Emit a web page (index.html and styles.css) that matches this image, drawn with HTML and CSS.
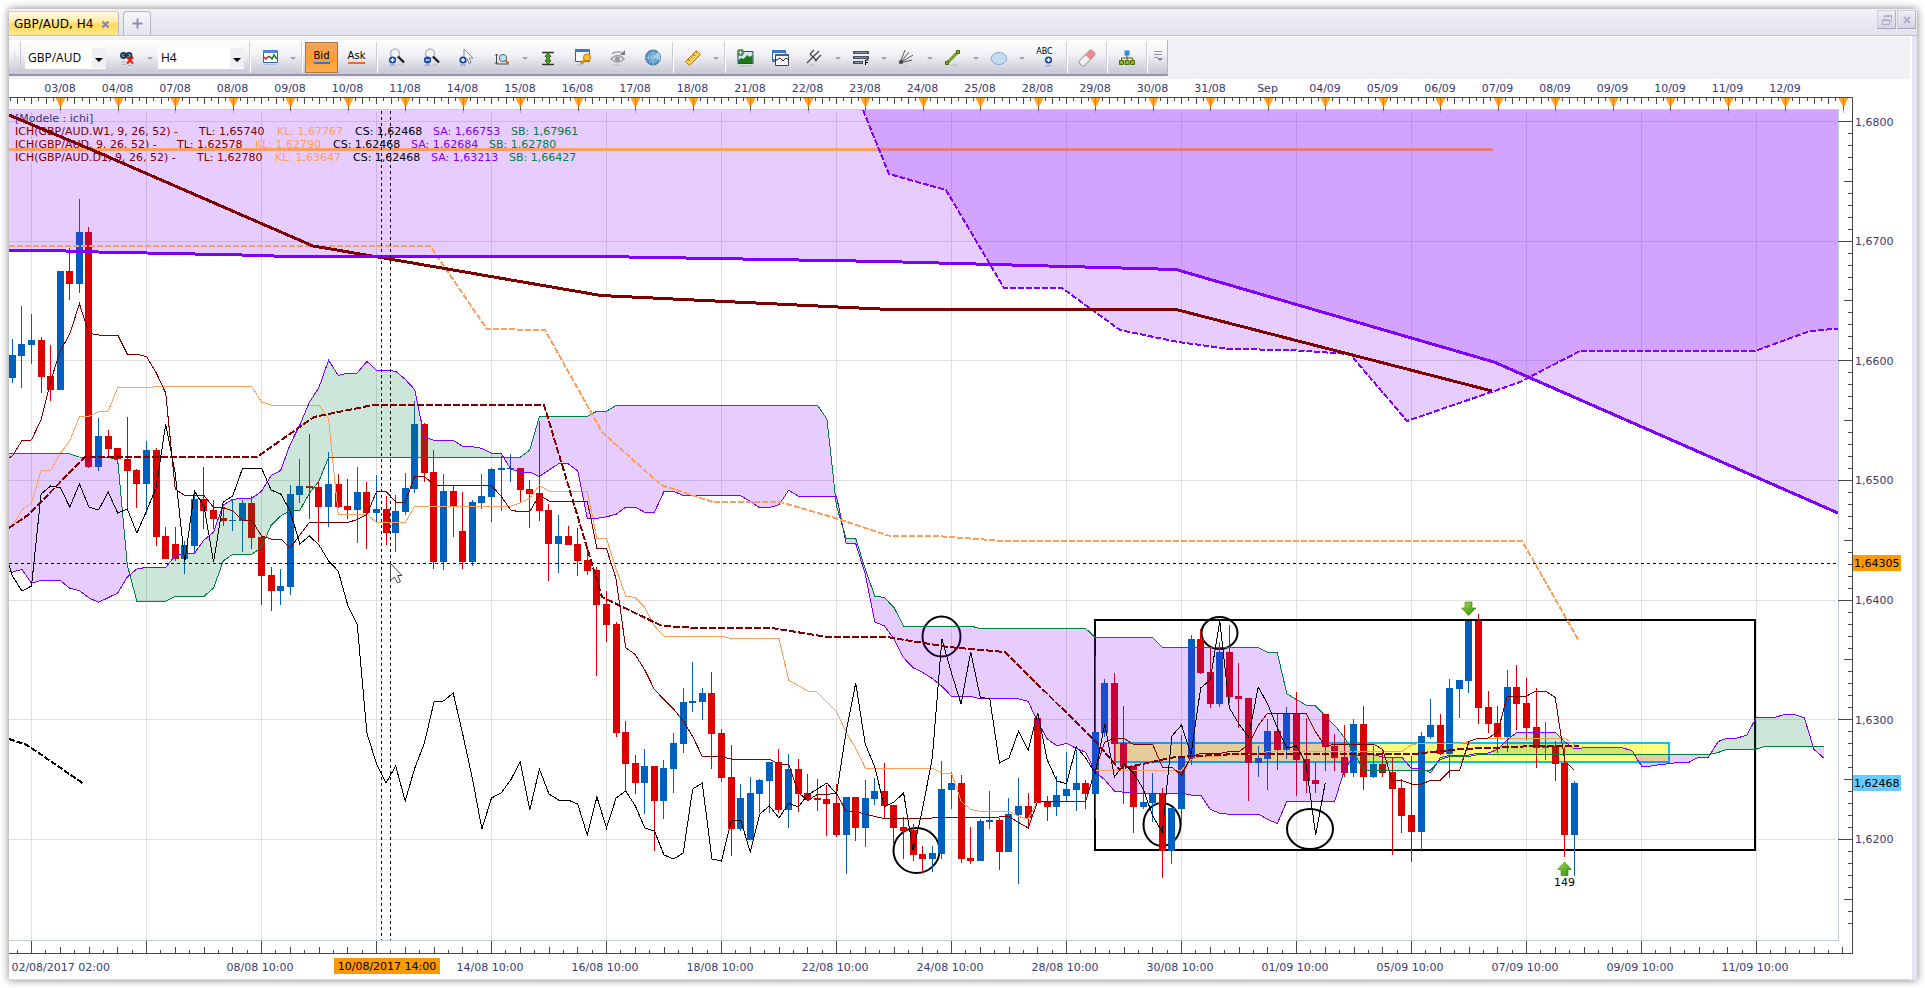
FILE: index.html
```html
<!DOCTYPE html>
<html lang="fr">
<head>
<meta charset="utf-8">
<title>GBP/AUD, H4</title>
<link rel="stylesheet" href="styles.css">
</head>
<body>
<div class="window">
  <header class="tabbar">
    <nav class="tabs">
      <div class="tab tab-active"><span>GBP/AUD, H4</span>
        <button class="tab-close" aria-label="Close tab"><svg width="9" height="9" viewBox="0 0 9 9"><path d="M1.5 1.5l6 6M7.5 1.5l-6 6" stroke="#8886a8" stroke-width="2.2"/></svg></button>
      </div>
      <button class="tab tab-new" aria-label="New tab"><svg width="11" height="11" viewBox="0 0 11 11"><path d="M5.500 .5v10M.5 5.500h10" stroke="#8f8dab" stroke-width="2"/></svg></button>
    </nav>
    <div class="window-buttons">
      <button class="win-btn" aria-label="Restore"><svg width="12" height="12" viewBox="0 0 12 12" fill="none" stroke="#b2b2cc"><path d="M3.500 4V1.500h7v6H9M3.500 2.500h7"/><path d="M1.500 5.500h7v5h-7zM1.500 6.500h7"/></svg></button>
      <button class="win-btn" aria-label="Close"><svg width="10" height="10" viewBox="0 0 10 10"><path d="M2 2l6 6M8 2l-6 6" stroke="#b2b2cc" stroke-width="2.400"/></svg></button>
    </div>
  </header>
  <main class="pane">
    <div class="toolbar-row">
      <div class="toolbar">
        <span class="grip"></span>
        <div class="combo combo-symbol"><select aria-label="Symbol"><option>GBP/AUD</option></select><span class="combo-arrow"></span></div>
        <button class="tool" aria-label="Unlink"><svg width="18" height="18" viewBox="0 0 18 18" fill="none"><circle cx="5.500" cy="6.500" r="2.600" fill="#7f9db5" stroke="#1d3350" stroke-width="1.600"/><circle cx="11" cy="6.500" r="2.600" fill="#7f9db5" stroke="#1d3350" stroke-width="1.600"/><path d="M5 6.500h6" stroke="#1d3350" stroke-width="1.500"/><path d="M9 8l6 6.500M15 8l-6 6.500" stroke="#ee1c00" stroke-width="2"/><path d="M3 13h4M4 15.500h4M10 16.500h4" stroke="#b4b4c2"/></svg></button>
        <button class="drop" aria-label="Link options"></button>
        <div class="combo combo-period"><select aria-label="Period"><option>H4</option></select><span class="combo-arrow"></span></div>
        <span class="sep"></span>
        <button class="tool" aria-label="Chart type"><svg width="18" height="18" viewBox="0 0 18 18"><path d="M2.500 1.500h14v12h-14z" fill="#fff" stroke="#2d5fc0"/><path d="M2 1h15v3H2z" fill="#4a85e0"/><path d="M3 8l2 2 3-3" fill="none" stroke="#d82010" stroke-width="1.500"/><path d="M8 7l3 3 2-4 3 4" fill="none" stroke="#207020" stroke-width="1.500"/><path d="M2 15.500h14" stroke="#9db8e0" opacity=".7"/></svg></button>
        <button class="drop" aria-label="Chart type options"></button>
        <span class="sep"></span>
        <button class="quote quote-bid"><span>Bid</span></button>
        <button class="quote quote-ask"><span>Ask</span></button>
        <span class="sep"></span>
        <button class="tool" aria-label="Zoom in"><svg width="18" height="20" viewBox="0 0 18 20"><circle cx="7" cy="5.500" r="4.500" fill="#f1f3f6" stroke="#b4b8c0" stroke-width="1.500"/><path d="M10 8.500l6 6" stroke="#222" stroke-width="2.400"/><circle cx="4.500" cy="12" r="3.600" fill="#1548a8"/><path d="M4.500 10v4M2.500 12h4" stroke="#fff" stroke-width="1.300"/><path d="M2 18a3 3 0 0 1 5 0" stroke="#9db2dc" fill="none" stroke-width="2"/><path d="M9 18l3-2 3 2" stroke="#b8b8c4" fill="none"/></svg></button>
        <button class="tool" aria-label="Zoom out"><svg width="18" height="20" viewBox="0 0 18 20"><circle cx="7" cy="5.500" r="4.500" fill="#f1f3f6" stroke="#b4b8c0" stroke-width="1.500"/><path d="M10 8.500l6 6" stroke="#222" stroke-width="2.400"/><circle cx="4.500" cy="12" r="3.600" fill="#1548a8"/><path d="M2.500 12h4" stroke="#fff" stroke-width="1.300"/><path d="M2 18a3 3 0 0 1 5 0" stroke="#9db2dc" fill="none" stroke-width="2"/><path d="M9 18l3-2 3 2" stroke="#b8b8c4" fill="none"/></svg></button>
        <button class="tool" aria-label="Pointer zoom"><svg width="18" height="20" viewBox="0 0 18 20"><path d="M6 1v12l3-2.500 2 5 2-1-2-4.500h4z" fill="#f6f6f8" stroke="#8a8a92"/><circle cx="5" cy="12" r="3.600" fill="#1548a8"/><path d="M5 10v4M3 12h4" stroke="#fff" stroke-width="1.300"/><path d="M2.500 18a3 3 0 0 1 5 0" stroke="#9db2dc" fill="none" stroke-width="2"/></svg></button>
        <button class="tool" aria-label="Fit"><svg width="18" height="20" viewBox="0 0 18 20"><path d="M3.500 6v10h12M2 7.500L3.500 6 5 7.500M2 14.500L3.500 16 5 14.500" fill="none" stroke="#444"/><circle cx="10" cy="10" r="3.600" fill="#b9e4ee" stroke="#4d6a72"/><path d="M12.500 12.500l3 3" stroke="#b8641a" stroke-width="2"/></svg></button>
        <button class="drop" aria-label="Fit options"></button>
        <button class="tool" aria-label="Autoscale"><svg width="14" height="18" viewBox="0 0 14 18"><path d="M1 3.500h12M1 15.500h12" stroke="#333" stroke-width="1.500"/><path d="M7 3.500l3 4H8.500v4H10l-3 4-3-4h1.500v-4H4z" fill="#4ca01c" stroke="#1c5806" stroke-width=".8"/></svg></button>
        <button class="tool" aria-label="Properties"><svg width="18" height="20" viewBox="0 0 18 20"><path d="M1.500 1.500h14v12h-14z" fill="#f4f8ff" stroke="#2d5fb4"/><path d="M1 1h15v3H1z" fill="#3f76d0"/><path d="M7 16l5-5" stroke="#d99000" stroke-width="2.600"/><circle cx="13" cy="9.500" r="3.600" fill="#f8bc30" stroke="#c07808"/><path d="M3 17h6" stroke="#b0bcd8"/></svg></button>
        <button class="tool" aria-label="Visibility"><svg width="18" height="18" viewBox="0 0 18 18" fill="none"><path d="M2 10q7-7 13 0-6 6-13 0z" fill="#ececf0" stroke="#a0a0a6" stroke-width="1.500"/><circle cx="8.500" cy="10" r="2.600" fill="#98989e"/><path d="M3 5q5-4 10-1" stroke="#a0a0a6" stroke-width="1.500"/><path d="M11 6l5-5v5z" fill="#77777d"/><path d="M4 16q4 1 8 0" stroke="#bcbcc6"/></svg></button>
        <button class="tool" aria-label="Radar"><svg width="18" height="18" viewBox="0 0 18 18"><circle cx="9" cy="8.500" r="7.500" fill="#5796c4" stroke="#3a78aa"/><path d="M9 8.500L14 3q3 3 2 8z" fill="#a9d3ea"/><circle cx="9" cy="8.500" r="4.500" fill="none" stroke="#a8cde4"/><circle cx="9" cy="8.500" r="2" fill="none" stroke="#c8e4f2"/><path d="M9 1v15M1.500 8.500h15" stroke="#8dbcd8" stroke-width=".7"/></svg></button>
        <span class="sep"></span>
        <button class="tool" aria-label="Ruler"><svg width="18" height="18" viewBox="0 0 18 18"><path d="M1.500 12.500l11-11 4 4-11 11z" fill="#f8ce5a" stroke="#b07a20"/><path d="M4 10l2 2M6.500 7.500l1.500 1.500M9 5l2 2M11.500 2.500L13 4" stroke="#8a5c10"/></svg></button>
        <button class="drop" aria-label="Ruler options"></button>
        <span class="sep"></span>
        <button class="tool" aria-label="Add image"><svg width="18" height="20" viewBox="0 0 18 20"><path d="M2 3.500h15v12H2z" fill="#cfe6f8" stroke="#22467e"/><path d="M2.500 15v-3l3-2 2 1 4-4 2 2 3-2v8z" fill="#1c7a10"/><circle cx="4.500" cy="4.500" r="3.400" fill="#3c8c18"/><path d="M4.500 2.500v4M2.500 4.500h4" stroke="#fff" stroke-width="1.200"/><path d="M3 18h13" stroke="#a8c0a8"/></svg></button>
        <button class="tool" aria-label="Overlay"><svg width="18" height="18" viewBox="0 0 18 18"><path d="M1.500 1.500h13v11h-13z" fill="#f4f8ff" stroke="#2d5fb4"/><path d="M1 1h14v3H1z" fill="#3f76d0"/><path d="M4.500 5.500h13v11h-13z" fill="#f8f8fc" stroke="#33435e"/><path d="M4 5h14v2H4z" fill="#4a5f86"/><path d="M2 11h4l3-2 3 3 3-3 3 2" fill="none" stroke="#222"/></svg></button>
        <button class="tool" aria-label="Pitchfork"><svg width="18" height="18" viewBox="0 0 18 18" fill="none" stroke="#444" stroke-width="1.200"><path d="M1 14l5-5M4 5l7 7M4 5l4-4M6 9l7-7M9 12l6-6"/><path d="M4 16h5" stroke="#bbb"/></svg></button>
        <button class="drop" aria-label="Pitchfork options"></button>
        <button class="tool" aria-label="Fibonacci levels"><svg width="18" height="18" viewBox="0 0 18 18"><path d="M1 3.500h16M1 8.500h16M1 13.500h10" stroke="#46525f" stroke-width="3"/><path d="M3 3.500h12M3 8.500h12M3 13.500h7" stroke="#8794a0"/><path d="M13.500 16v-5h3M13.500 13.500h2.500" fill="none" stroke="#000"/></svg></button>
        <button class="drop" aria-label="Fibonacci options"></button>
        <button class="tool" aria-label="Fan"><svg width="18" height="18" viewBox="0 0 18 18" fill="none" stroke="#555"><path d="M2 14L7 1M2 14l9-11M2 14L15 6M2 14l12-3"/><circle cx="3" cy="13" r="1.800" fill="#444"/><path d="M5 17h5" stroke="#c0c0ca"/></svg></button>
        <button class="drop" aria-label="Fan options"></button>
        <button class="tool" aria-label="Trend line"><svg width="18" height="18" viewBox="0 0 18 18"><path d="M3 14L14 3" stroke="#3f6a08" stroke-width="2.600"/><path d="M3 14L14 3" stroke="#93bd1c" stroke-width="1.400"/><path d="M1.500 12.500h3v3h-3zM12.500 1.500h3v3h-3z" fill="#84b018" stroke="#3f6a08"/><path d="M6 16h8" stroke="#b6b6c2"/></svg></button>
        <button class="drop" aria-label="Line options"></button>
        <button class="tool" aria-label="Ellipse"><svg width="18" height="18" viewBox="0 0 18 18"><ellipse cx="9" cy="9.500" rx="7.800" ry="6" fill="#c5dcf0" stroke="#84aad0"/></svg></button>
        <button class="drop" aria-label="Shape options"></button>
        <button class="tool tool-text" aria-label="Text"><span class="abc">ABC</span><svg width="9" height="12" viewBox="0 0 9 12"><circle cx="4.500" cy="4" r="3.600" fill="#1548a8"/><path d="M4.500 2v4M2.500 4h4" stroke="#fff" stroke-width="1.300"/><path d="M2 10.500a3 3 0 0 1 5 0" stroke="#9db2dc" fill="none" stroke-width="1.500"/></svg></button>
        <span class="sep sep-wide"></span>
        <button class="tool" aria-label="Eraser"><svg width="18" height="18" viewBox="0 0 18 18"><g transform="rotate(-45 9 9)"><rect x="0" y="5.500" width="18" height="7" rx="2.500" fill="#f2f0f0" stroke="#a89c9c"/><path d="M10 5.500h5.500a2.500 2.500 0 0 1 2.500 2.500v2a2.500 2.500 0 0 1-2.500 2.500H10z" fill="#e88a92"/></g></svg></button>
        <span class="sep"></span>
        <button class="tool" aria-label="Object tree"><svg width="18" height="18" viewBox="0 0 18 18"><path d="M9 6v5M3.500 12V9h11v3" fill="none" stroke="#4c6a10"/><path d="M6.500 1.500h5v5h-5z" fill="#2e8ae6"/><path d="M1.500 11.500h4v4h-4zM7 11.500h4v4H7zM12.500 11.500h4v4h-4z" fill="#93b81c" stroke="#4c6a10"/></svg></button>
        <span class="sep sep-end"></span>
        <button class="overflow" aria-label="More tools"><svg width="10" height="12" viewBox="0 0 10 12"><path d="M1 1.500h8M1 4.500h8M1 7.500h4" stroke="#9090a6"/><path d="M4 8h6l-3 3z" fill="#808098"/></svg></button>
      </div>
    </div>
    <svg id="chart" class="chart" viewBox="9 79 1901 900" role="img" aria-label="GBP/AUD H4 Ichimoku chart"></svg>
  </main>
</div>
<script src="chart.js"></script>
</body>
</html>
```
FILE: styles.css
```css
* { box-sizing: border-box; }
body { margin: 0; padding: 9px 8px 8px 9px; background: #fff; font-family: "DejaVu Sans", Verdana, sans-serif; font-size: 11px; color: #000; }
button { border: 0; padding: 0; margin: 0; background: none; font: inherit; color: inherit; }
.window { box-shadow: 0 0 8px rgba(0, 0, 0, .5); background: #e5e4f0; }
.tabbar { display: flex; justify-content: space-between; height: 27px; padding-top: 2px; background: linear-gradient(#f1f1f5, #e2e2ec); border-bottom: 1px solid #c0c0d2; }
.tabs { display: flex; align-items: flex-end; gap: 4px; }
.tab { display: flex; align-items: center; height: 24px; border-radius: 0 4px 0 0; }
.tab-active { gap: 7px; padding: 1px 7px 0 5px; border-right: 1px solid #b9b6c8; border-top: 1px solid #d8cfa8; background: linear-gradient(#fffbe6, #ffe9a0 45%, #ffd95a 52%, #ffe88c); font-size: 12px; }
.tab-close { display: flex; padding: 1px; }
.tab-new { justify-content: center; width: 28px; border: 1px solid #b6b6cc; border-bottom: 0; border-radius: 4px 4px 0 0; background: linear-gradient(#f6f6fa, #e4e4ee); }
.window-buttons { display: flex; gap: 1px; padding-right: 1px; }
.win-btn { display: flex; align-items: center; justify-content: center; width: 19px; height: 19px; margin-top: -1px; border: 1px solid #cdcddd; border-bottom-color: #a4a4c0; border-right-color: #b0b0c8; background: linear-gradient(#eeeef6, #d4d4e2); }
.pane { margin-right: 5px; border-top: 1px solid #fff; border-right: 2px solid #fff; border-bottom: 1px solid #d8d8e2; background: #fff; }
.toolbar-row { display: flex; height: 42px; padding-top: 3px; background: #f0f0f5; }
.toolbar { display: flex; align-items: center; height: 36px; padding-top: 1px; border-right: 1px solid #b4b4c6; border-bottom: 2px solid #9494ac; background: linear-gradient(#fff, #f3f3f7 40%, #c6c6d4); }
.grip { width: 12px; height: 31px; margin-right: 4px; border-right: 1px solid #c9c9d6; background: repeating-linear-gradient(90deg, transparent 0 3px, #d6d6e0 3px 4px) content-box; padding: 10px 2px 10px 2px; }
.combo { position: relative; display: flex; height: 22px; background: #fff; }
.combo-symbol { width: 81px; margin-right: 3px; }
.combo-period { width: 86px; margin-left: 3px; margin-right: 3px; }
.combo select { flex: 1; min-width: 0; padding: 0 14px 0 3px; border: 0; background: none; appearance: none; font: 12px "Open Sans", sans-serif; color: #000; }
.combo-arrow { position: absolute; right: 0; top: 1px; width: 14px; height: 20px; background: #efeff4; pointer-events: none; }
.combo-arrow::after { content: ""; position: absolute; left: 3px; top: 10px; border: 4px solid transparent; border-top-color: #000; border-bottom: 0; }
.tool { display: flex; align-items: center; justify-content: center; flex: none; width: 35px; height: 31px; }
.tool-text { flex-direction: column; align-items: center; }
.tool-text svg { margin-left: 7px; }
.abc { font-size: 8px; line-height: 8px; }
.drop { position: relative; width: 11px; height: 31px; }
.drop::after { content: ""; position: absolute; left: 3px; top: 15px; border: 3px solid transparent; border-top-color: #a2a2b4; border-bottom: 0; }
.sep { flex: none; width: 5px; height: 31px; padding: 0 1px 0 2px; background: linear-gradient(90deg, #cfcfdb 50%, #fff 50%) content-box; }
.drop + .sep { margin-left: 1px; }
.sep-wide { margin-left: 2px; }
.quote { display: flex; align-items: center; justify-content: center; flex: none; width: 35px; height: 31px; font-size: 10px; line-height: 10px; }
.quote span { border-bottom: 2px solid #ff6030; padding-bottom: 1px; }
.quote-bid { width: 33px; margin: 0 1px; border: 1px solid #a87840; background: linear-gradient(#f4a45c, #ff9c38 60%, #ffb04c); }
.quote-bid span { border-bottom-color: #1080f0; }
.overflow { width: 18px; height: 31px; }
.chart { display: block; width: 100%; height: auto; font-family: "DejaVu Sans", Verdana, sans-serif; font-size: 11px; }
.chart text { fill: #3a3a70; }
.chart text.ink { fill: #000; }
.chart .tl { fill: #800000; }
.chart .kl { fill: #ff9f5a; }
.chart .cs { fill: #000; }
.chart .sa { fill: #8000ff; }
.chart .sb { fill: #008040; }
.crisp { shape-rendering: crispEdges; }
.line { fill: none; }
```
FILE: chart.js
```js
const svg = document.getElementById('chart');
const LEFT = 9, RIGHT = 1838, TOP = 110, BOTTOM = 940, PITCH = 115 / 12;
const barX = i => 12.33 + i * PITCH;
const priceY = p => 121.5 + (1.68 - p) * 11966;

function el(name, attrs, parent = svg, text) {
  const n = document.createElementNS('http://www.w3.org/2000/svg', name);
  for (const k in attrs) n.setAttribute(k, attrs[k]);
  if (text !== undefined) n.textContent = text;
  parent.appendChild(n);
  return n;
}

// Each block: y origin, then candles as direction + high, body top, body bottom, low in thirds of a unit.
const feed = [
  [170, `u507 555 624 638|u408 522 557 654|u432 510 524 582|d501 510 620 669|d525 618 660 693|u303 303 660 660|d234 303 342 390|u87 186 342 368|d171 186 891 893|u744 798 891 903|d780 798 836 858|d834 834 868 868|d741 867 903 1018|d897 899 942 1014|u813 840 942 1032|d834 840 1101 1128|d1071 1098 1167 1167|d1071 1122 1167 1173|u1113 1125 1167 1212|u963 987 1128 1146|d891 987 1023 1077|d990 1020 1047 1077|d1014 1044 1053 1067|u990 1050 1053 1083|u990 999 1052 1146|d978 999 1104 1137|d1098 1101 1217 1305|d1191 1215 1263 1323|u1197 1248 1263 1305|u945 972 1251 1275|u867 948 975 999|d792 948 953 1047|d933 951 1011 1116|u846 942 1011 1071|d912 942 1011 1014|d927 1008 1020 1047|u891 966 1020 1119|d936 966 1029 1137|u915 1017 1029 1056|d978 1017 1089 1125|u975 1023 1089 1146|u909 954 1026 1035|u693 762 957 969|d758 762 909 936|d840 906 1176 1197|u912 963 1176 1200|d948 963 1009 1101|d966 1083 1176 1197|u990 996 1176 1188`],
  [350, `u372 438 459 477|u354 357 441 516|u318 354 360 483|u312 354 357 396|d354 354 420 457|d390 417 432 534|d213 429 483 513|d462 480 582 693|u495 558 582 669|d528 558 585 585|d534 582 633 678|d594 630 663 675|d651 660 765 978|d723 762 825 876|d816 822 1149 1161|d1113 1146 1242 1324|d1215 1239 1299 1332|u1197 1248 1299 1392|d1248 1248 1353 1503|u1230 1254 1353 1407|u1149 1179 1257 1329|u1014 1056 1182 1209|u936 1053 1058 1086|u1014 1029 1056 1110|d966 1029 1152 1257|d1137 1149 1284 1296`],
  [550, `d585 681 837 918|u702 744 837 843|u681 729 870 870|u687 690 732 789|u636 636 693 789|d597 636 780 789|u612 657 780 834|d627 657 732 786|d672 729 750 750|d687 744 750 783|d706 747 762 858|d702 759 855 861|u741 741 855 972|d741 741 834 873|u690 744 834 891|u684 723 747 765|d639 723 767 804|d765 765 834 882|d802 831 843 927|d822 840 915 933|d888 912 927 969|u888 909 927 966|u633 717 912 927|u666 699 720 777|d675 699 927 939|d831 924 933 942|u807 813 933 933|u723 810 816 837|d804 810 906 960|u744 792 906 906|u684 768 795 1002|d729 768 804 834|d504 504 760 760|d738 756 771 813|u678 735 771 798|u606 717 738 753|u600 699 720 783|d690 699 732 777`],
  [560, `u288 516 702 777|u357 369 519 531|d339 369 552 606|d438 549 621 732|d618 618 741 819|u615 726 741 747|u640 699 729 786|d684 699 873 954|u744 744 873 912|u525 594 747 798|u225 237 597 615|d207 237 339 342|d264 336 432 444|u246 276 432 441|d195 276 411 429|d309 408 417 504|d414 414 609 723|u558 594 609 651|u477 513 597 690|d459 513 570 630|u441 459 570 597|d396 459 600 708|d474 597 663 699|d606 660 671 699|d462 462 560 633|d522 558 594 633|d495 591 639 651|u477 492 639 651|d438 492 651 690|u558 612 651 654|d576 612 639 651|d594 636 687 885|d657 684 768 819|d588 765 816 906|u516 528 816 870|u417 495 531 537|d462 495 582 585|u357 384 582 654|u360 360 387 474|u183 183 363 399|d162 183 444 492|d393 441 492 519|d438 489 531 579|u330 381 531 576|d315 381 432 510|d354 429 504 540|d384 501 564 624|u486 558 564 600|d543 558 612 663|d561 609 825 891|u663 669 825 948`]
];
const candles = feed.flatMap(([oy, rows]) => rows.split('|').map(r => {
  const v = r.slice(1).split(' ').map(n => oy + n / 3);
  return { up: r[0] === 'u', high: v[0], top: v[1], bottom: v[2], low: v[3] };
}));

// Values known before the loaded history is long enough to derive them; "y*n" repeats y n times.
const seed = s => s.split(' ').flatMap(t => {
  const [y, n] = t.split('*');
  return Array(+(n || 1)).fill(170 + y / 3);
});
const midpoint = (i, n) => {
  const w = candles.slice(i - n + 1, i + 1);
  return (Math.min(...w.map(c => c.high)) + Math.max(...w.map(c => c.low))) / 2;
};
const tenkan = seed('858 812 810 749 633 543 492 401');
const kijun = seed('1068 1021 999 901 901 851 812 740 739 725 723 653*4 650*10');
const spanA = seed('1207 1198 1240 1231*3 1255 1262 1284 1297 1283 1269 1221 1197 1192*3 1157 1150*2 1110 1086 1005 988 985 985 964 917 901 823 765 697 652 571 616 610 609 574 601 601 604 628 659 802 811*3 829 830 835 850');
const spanB = seed('850*6 852 861 862*3 870 1185 1294*4 1279*4 1254 1173 1153*3 1132 1066 1038 1021*2 970 933 862*21 840 739*6 724*2 706*14');
for (let i = tenkan.length; i < candles.length; i++) tenkan.push(midpoint(i, 9));
for (let i = kijun.length; i < candles.length; i++) kijun.push(midpoint(i, 26));
for (let i = spanA.length; i < candles.length + 26; i++) spanA.push((tenkan[i - 26] + kijun[i - 26]) / 2);
for (let i = spanB.length; i < candles.length + 26; i++) spanB.push(midpoint(i - 26, 52));
const chikou = candles.slice(26).map(c => (c.up ? c.top : c.bottom));

const defs = el('defs', {});
const clip = el('clipPath', { id: 'plot' }, defs);
el('rect', { x: LEFT, y: TOP, width: RIGHT - LEFT, height: BOTTOM - TOP }, clip);
const grad = el('linearGradient', { id: 'leaf', x1: 0, x2: 1, y1: 0, y2: 1 }, defs);
el('stop', { offset: 0, 'stop-color': '#b4e04c' }, grad);
el('stop', { offset: 1, 'stop-color': '#1c8a08' }, grad);

// Grid
const grid = el('g', { stroke: '#e0e0e0', class: 'crisp' });
for (let k = 0; k < 16; k++) el('path', { d: `M${31.5 + 115 * k} 112V${BOTTOM}` }, grid);
for (let k = 0; k < 7; k++) el('path', { d: `M${LEFT} ${Math.floor(priceY(1.68 - k / 100)) + .5}H${RIGHT - 2}` }, grid);

const plot = el('g', { 'clip-path': 'url(#plot)' });

// Drawings under the candles
el('rect', { x: 1115, y: 743, width: 554, height: 19, fill: '#ffff00', 'fill-opacity': .5, stroke: '#00c4ff', 'stroke-width': 2 }, plot);
el('rect', { x: 1095, y: 620, width: 660, height: 230, fill: 'none', stroke: '#000', 'stroke-width': 2 }, plot);
[[941.5, 636.5, 19, 20], [916.5, 850.5, 23, 22.5], [1219.5, 633, 18, 16], [1162, 824.5, 18.5, 21.5], [1310, 829, 23, 20]]
  .forEach(([cx, cy, rx, ry]) => el('ellipse', { cx, cy, rx, ry, fill: 'none', stroke: '#000', 'stroke-width': 2 }, plot));

// Candles
const bars = el('g', { class: 'crisp' }, plot);
candles.forEach((c, i) => {
  const x = Math.round(barX(i) - .5), fill = c.up ? '#0060c0' : '#dc0000';
  const y = Math.round(c.top), h = Math.max(1, Math.round(c.bottom) - y), hy = Math.round(c.high);
  el('rect', { x, y: hy, width: 1, height: Math.max(1, Math.round(c.low) - hy), fill }, bars);
  el('rect', { x: x - 3, y, width: 7, height: h, fill }, bars);
});

// H4 cloud
const fills = { a: '', b: '' };
let run = null;
const flush = () => {
  if (run && run.up.length > 1) fills[run.side] += 'M' + run.up.join('L') + 'L' + run.down.reverse().join('L') + 'Z';
};
for (let i = 0; i < spanA.length; i++) {
  const x = barX(i) - (i ? 0 : 4), d = spanA[i] - spanB[i], side = d > 0 ? 'a' : 'b';
  if (run && run.side !== side) {
    const p = spanA[i - 1] - spanB[i - 1], t = p / (p - d);
    const cx = barX(i - 1) + t * PITCH, cy = spanA[i - 1] + t * (spanA[i] - spanA[i - 1]);
    run.up.push([cx, cy]); run.down.push([cx, cy]);
    flush();
    run = { side, up: [[cx, cy]], down: [[cx, cy]] };
  }
  if (!run) run = { side, up: [], down: [] };
  run.up.push([x, spanA[i]]); run.down.push([x, spanB[i]]);
}
flush();
el('path', { d: fills.a, fill: '#8000ff', 'fill-opacity': .2, class: 'crisp' }, plot);
el('path', { d: fills.b, fill: '#008040', 'fill-opacity': .2, class: 'crisp' }, plot);

// Daily and weekly studies, in chart units
const weeklyA = '9,250 50,250.500 98,252 147,253 242,255 290,256.500 600,256.500 884,261.500 1176,269.500 1494,362 1838,513';
const dailyA = '863,110 889,174 946,190 1004,288 1062,288 1120,330 1178,342 1230,349 1289,350 1350,354 1407,421 1503,388 1520,382 1580,351 1755,351 1810,331 1838,328.500';
const fillAbove = pts => {
  const start = pts.split(',')[0];
  el('polygon', { points: `${start},${TOP} ${pts} ${RIGHT},${TOP}`, fill: '#8000ff', 'fill-opacity': .2, class: 'crisp' }, plot);
};
const line = (points, stroke, width, dash) => el('polyline', {
  points, stroke, 'stroke-width': width, class: 'line crisp', ...(dash ? { 'stroke-dasharray': dash } : {})
}, plot);

fillAbove(weeklyA);

// Study legend: label, column start, then one value per line of the study
const legend = [
  ['ICH(GBP/AUD.W1, 9, 26, 52) -', 199, '1,65740', '1,67767', '1,62468', '1,66753', '1,67961'],
  ['ICH(GBP/AUD, 9, 26, 52) -', 177, '1,62578', '1,62790', '1,62468', '1,62684', '1,62780'],
  ['ICH(GBP/AUD.D1, 9, 26, 52) -', 197, '1,62780', '1,63647', '1,62468', '1,63213', '1,66427']
];
el('text', { x: 15, y: 122 }, plot, '[Modele : ichi]');
legend.forEach(([label, start, ...values], r) => {
  const y = 135 + 13 * r;
  el('text', { x: 15, y }, plot).append(el('tspan', { class: 'tl' }, plot, label));
  ['tl', 'kl', 'cs', 'sa', 'sb'].forEach((k, n) => {
    el('tspan', { class: k }, el('text', { x: start + 78 * n, y }, plot), `${k.toUpperCase()}: ${values[n]}`);
  });
});
line('9,149.500 1493,149.500', '#ff9f5a', 3);
fillAbove(dailyA);

const series = v => v.map((y, i) => `${barX(i).toFixed(1)},${y.toFixed(1)}`).join(' ');
line(`5,532 ${series(kijun)}`, '#ff9f5a', 1);
line(`5,460 ${series(tenkan)}`, '#800000', 1);
line(`5,570 ${series(spanA)}`, '#8000ff', 1);
line(`5,453.300 ${series(spanB)}`, '#008040', 1);
line(`5,552 ${series(chikou)}`, '#000', 1);
line('9,246 430,246 487,329 545,330 602,432 661,485 713,502 780,502 835,518 888,535.500 943,536.500 1004,541 1522,541 1533,560 1579,641', '#ff9f5a', 2, '6 2');
line('9,528 28,515 85,457 257,457 314,417 373,405 544,405 602,597 662,626 700,628 772,628 827,637 887,637 948,647 1005,652 1097,743 1119,769 1175,757 1237,754 1413,754 1460,749 1490,748 1534,746 1579,746', '#800000', 2, '7 2');
line('9,739 27,745 84,784', '#000', 2, '6 2');
line(dailyA, '#8000ff', 2, '6 2');
line('9,115 97,152 313,246 375,256.500 601,295.500 890,309.500 1176,309.500 1492,391', '#800000', 3);
line(weeklyA, '#8000ff', 3);

// Crosshair and pointer
line('381.500,111 381.500,940', '#000', 1, '3 3');
line('390.500,111 390.500,940', '#000', 1, '3 3');
line('9,563.500 1838,563.500', '#000', 1, '3 3');
el('path', { d: 'M390.500 563.500v17l4-3.500 3 6 3-1.500-3-6h4.500z', fill: '#fff', stroke: '#404050' }, plot);

// Trade markers
el('path', { d: 'M1465 602h7v6h4l-7.500 7.500-7-7.500h3.500z', fill: 'url(#leaf)', stroke: '#3c7c10', 'stroke-width': .6 }, plot);
el('path', { d: 'M1561 875.500h7v-6h3.500l-7-7.500-7 7.500h3.500z', fill: 'url(#leaf)', stroke: '#3c7c10', 'stroke-width': .6 }, plot);
el('text', { x: 1564.5, y: 886, 'text-anchor': 'middle', class: 'ink' }, plot, '149');

// Plot frame
el('path', { d: `M${LEFT} ${TOP - .5}H${RIGHT + .5}V${BOTTOM + .5}H${LEFT}`, fill: 'none', stroke: '#c3cfdc', class: 'crisp' });

// Axes
const axis = el('g', { stroke: '#484848', fill: 'none', class: 'crisp' });
el('path', { d: `M${LEFT} 97.500H1852.500V953.500H${LEFT}` }, axis);
let ticks = '';
for (let k = -7; 60.5 + k * 7.1875 < 1850; k++) {
  const x = Math.floor(60.5 + k * 7.1875) + .5;
  if (k % 8) {
    ticks += `M${x} 98v${k % 2 ? 3 : 6}`;
    continue;
  }
  ticks += `M${x} 107v3`;
  el('path', { d: `M${x - 5} 98h10l-5 10z`, fill: '#ffa52c' });
  el('path', { d: `M${x} 98v9`, stroke: '#e08000', class: 'crisp' });
  el('path', { d: `M${x} 110v3`, stroke: '#8060a0', 'stroke-opacity': .5, class: 'crisp' });
}
for (let k = -1; 31.5 + k * 14.375 < 1850; k++) {
  const x = Math.floor(31.5 + k * 14.375) + .5;
  ticks += `M${x} 953v-${k % 8 === 0 ? 12 : k % 2 ? 3 : 6}`;
}
for (let k = 0; k < 68; k++) {
  const y = Math.floor(121.5 + k * 11.966) + .5;
  ticks += `M1852 ${y}h-${k % 10 === 0 ? 14 : k % 5 === 0 ? 8 : 4}`;
}
el('path', { d: ticks }, axis);

const days = '03/08 04/08 07/08 08/08 09/08 10/08 11/08 14/08 15/08 16/08 17/08 18/08 21/08 22/08 23/08 24/08 25/08 28/08 29/08 30/08 31/08 Sep 04/09 05/09 06/09 07/09 08/09 09/09 10/09 11/09 12/09'.split(' ');
days.forEach((d, i) => el('text', { x: 60 + i * 57.5, y: 92, 'text-anchor': 'middle' }, svg, d));
el('text', { x: 110, y: 971, 'text-anchor': 'end' }, svg, '02/08/2017 02:00');
'08/08  14/08 16/08 18/08 22/08 24/08 28/08 30/08 01/09 05/09 07/09 09/09 11/09'.split(' ').forEach((d, i) => {
  if (d) el('text', { x: 260 + i * 115, y: 971, 'text-anchor': 'middle' }, svg, d + ' 10:00');
});
for (let k = 0; k < 7; k++) el('text', { x: 1855, y: Math.round(priceY(1.68 - k / 100)) + 4 }, svg, (1.68 - k / 100).toFixed(4).replace('.', ','));

el('rect', { x: 334, y: 958, width: 106, height: 16, fill: '#ff9900' });
el('text', { x: 387, y: 970, 'text-anchor': 'middle', class: 'ink' }, svg, '10/08/2017 14:00');
el('rect', { x: 1853, y: 555, width: 48, height: 16, fill: '#ff9900' });
el('text', { x: 1854, y: 567, class: 'ink' }, svg, '1,64305');
el('rect', { x: 1853, y: 775, width: 48, height: 16, fill: '#66ccff' });
el('text', { x: 1854, y: 787, class: 'ink' }, svg, '1,62468');
```
